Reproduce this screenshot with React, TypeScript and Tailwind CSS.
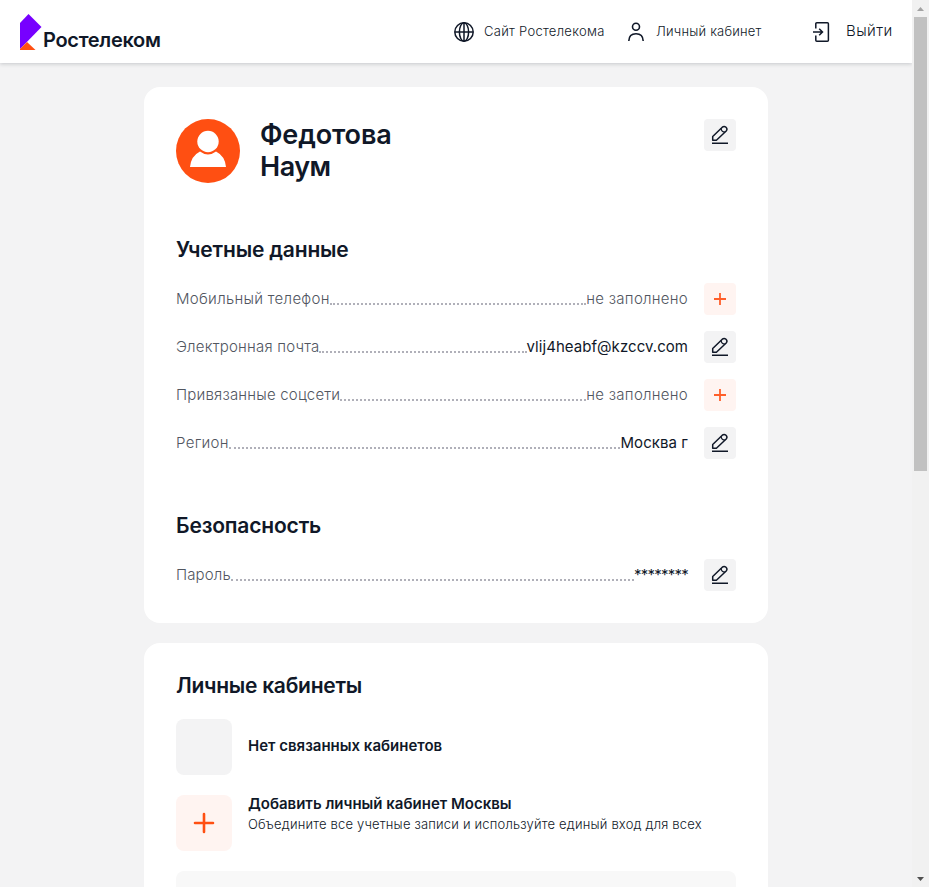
import type { ReactNode } from "react";

function PencilIcon() {
  return (
    <svg width="18" height="20" viewBox="0 0 18 20" fill="none" stroke="#101828" strokeWidth="1.5" strokeLinejoin="round">
      <path d="M1.7 15.2V11.5L11.3 2.2Q13.2 .7 15 2.3Q16.8 4.2 15.2 6L5.4 15.2Z" />
      <path d="M10.2 3.3Q10.2 7.1 14.1 7.1" strokeWidth="1.2" />
      <path d="M1 18.25H17" />
    </svg>
  );
}

function EditButton() {
  return (
    <button className="flex size-8 shrink-0 items-center justify-center rounded bg-[#f3f3f4]">
      <PencilIcon />
    </button>
  );
}

function AddButton() {
  return (
    <button className="flex size-8 shrink-0 items-center justify-center rounded bg-[#fff4f1]">
      <svg width="12" height="12" viewBox="0 0 12 12" stroke="#ff5f2a" strokeWidth="1.8">
        <path d="M6 0V12M0 6H12" />
      </svg>
    </button>
  );
}

interface RowProps {
  label: string;
  labelClass: string;
  children: ReactNode;
  action: "add" | "edit";
}

function Row({ label, labelClass, children, action }: RowProps) {
  return (
    <div className="flex h-8 items-center">
      <span className={`text-[15px] font-light text-[#51565f] ${labelClass}`}>{label}</span>
      <span className="mt-2.5 h-0 flex-1 border-t-2 border-dotted border-[#b0b0b9]" />
      {children}
      <span className="ml-4 flex">{action === "add" ? <AddButton /> : <EditButton />}</span>
    </div>
  );
}

function Empty() {
  return <span className="text-[15px] font-light tracking-[0.27px] text-[#51565f]">не заполнено</span>;
}

function Header() {
  return (
    <header className="flex h-[63px] shrink-0 items-center bg-white pr-5 pl-5 shadow-[0_1px_4px_rgba(16,24,40,0.2)]">
      <div className="flex items-start pt-1">
        <svg className="-mt-px" width="22" height="36" viewBox="0 0 22 36">
          <path d="M0 9L8.5 0L21.5 13L0 35Z" fill="#7700ff" />
          <path d="M7 28L15.5 36H0V35Z" fill="#ff4f12" />
        </svg>
        <span className="mt-[13px] ml-px text-[20px] leading-6 font-semibold tracking-[-0.3px]">Ростелеком</span>
      </div>
      <nav className="ml-auto flex items-center">
        <svg width="20" height="20" viewBox="0 0 20 20" fill="none" stroke="#101828" strokeWidth="1.5">
          <circle cx="10" cy="10" r="9.2" />
          <ellipse cx="10" cy="10" rx="4.6" ry="9.2" />
          <path d="M1 10H19M10 1V19" />
        </svg>
        <span className="ml-2.5 w-[120px] text-[13px] font-light tracking-[0.29px] whitespace-nowrap">Сайт Ростелекома</span>
        <svg className="ml-6" width="16" height="20" viewBox="0 0 16 20" fill="none" stroke="#101828" strokeWidth="1.6">
          <circle cx="8" cy="4.8" r="3.5" />
          <path d="M.8 19Q1 11.8 8 11.8T15.2 19" />
        </svg>
        <span className="ml-3 w-[106px] text-[13px] font-light tracking-[0.2px] whitespace-nowrap">Личный кабинет</span>
        <svg className="ml-[51px]" width="17" height="20" viewBox="0 0 17 20" fill="none" stroke="#101828" strokeWidth="1.5">
          <path d="M2.8 6.4V1.8Q2.8.8 3.8.8H14.4Q15.4.8 15.4 1.8V18.2Q15.4 19.2 14.4 19.2H3.8Q2.8 19.2 2.8 18.2V13.6" />
          <path d="M0 10H9.3M6.2 6.7L9.5 10L6.2 13.3" />
        </svg>
        <span className="ml-4 w-[46px] text-[15px] font-light tracking-[0.4px] whitespace-nowrap">Выйти</span>
      </nav>
    </header>
  );
}

function Scrollbar() {
  return (
    <div className="relative flex w-[17px] shrink-0 flex-col items-center bg-[#f1f1f1]">
      <div className="flex h-[17px] items-center">
        <svg width="7" height="4" viewBox="0 0 7 4" fill="#a3a3a3"><path d="M0 4L3.5 0L7 4Z" /></svg>
      </div>
      <div className="h-[454px] w-[13px] bg-[#c1c1c1]" />
      <div className="mt-auto flex h-[17px] items-center">
        <svg width="7" height="4" viewBox="0 0 7 4" fill="#505050"><path d="M0 0H7L3.5 4Z" /></svg>
      </div>
    </div>
  );
}

export default function App() {
  return (
    <div className="flex h-[887px] w-[929px] overflow-hidden bg-[#f3f3f4] font-['Inter','Liberation_Sans',sans-serif] text-[#101828]">
      <div className="flex w-[912px] flex-col">
        <Header />
        <main className="mx-auto mt-6 flex w-[624px] flex-col gap-5">
          <section className="h-[536px] rounded-2xl bg-white p-8">
            <div className="flex items-start">
              <svg width="64" height="64" viewBox="0 0 64 64">
                <circle cx="32" cy="32" r="32" fill="#ff4f12" />
                <path d="M14 48Q15 37 24 32.5Q32 38.5 40 32.5Q49 37 50 48Z" fill="#fff" />
                <circle cx="32" cy="22.5" r="10.7" fill="#fff" />
              </svg>
              <h1 className="ml-5 text-[27px] leading-8 font-semibold tracking-[-0.15px]">
                Федотова
                <br />
                <span className="tracking-[-0.5px]">Наум</span>
              </h1>
              <span className="ml-auto flex"><EditButton /></span>
            </div>
            <h2 className="mt-[53px] text-[21px] leading-7 font-semibold tracking-[-0.18px]">Учетные данные</h2>
            <div className="mt-[19px] flex flex-col gap-4">
              <Row label="Мобильный телефон" labelClass="tracking-[0.3px]" action="add"><Empty /></Row>
              <Row label="Электронная почта" labelClass="tracking-[0.2px]" action="edit">
                <span className="text-[15px] tracking-[0.05px]">vlij4heabf@kzccv.com</span>
              </Row>
              <Row label="Привязанные соцсети" labelClass="tracking-[0.2px]" action="add"><Empty /></Row>
              <Row label="Регион" labelClass="tracking-[0.3px]" action="edit">
                <span className="text-[15px] tracking-[0.08px]">Москва г</span>
              </Row>
            </div>
            <h2 className="mt-[53px] text-[21px] leading-7 font-semibold tracking-[-0.17px]">Безопасность</h2>
            <div className="mt-[19px]">
              <Row label="Пароль" labelClass="tracking-[0.12px]" action="edit">
                <span className="text-[15px] tracking-[-0.75px]">********</span>
              </Row>
            </div>
          </section>
          <section className="h-[320px] rounded-2xl bg-white px-8 pt-[29px]">
            <h2 className="text-[21px] leading-7 font-semibold tracking-[-0.27px]">Личные кабинеты</h2>
            <div className="mt-[19px] flex items-center gap-4">
              <div className="size-14 rounded-lg bg-[#f3f3f4]" />
              <p className="pb-0.5 text-[15px] font-semibold">Нет связанных кабинетов</p>
            </div>
            <div className="mt-5 flex gap-4">
              <button className="flex size-14 items-center justify-center rounded-lg bg-[#fff4f1]">
                <svg width="22" height="22" viewBox="0 0 22 22" stroke="#ff4f12" strokeWidth="2.6" strokeLinecap="round">
                  <path d="M11 2V20M2 11H20" />
                </svg>
              </button>
              <div>
                <p className="-mt-px text-[15px] leading-5 font-semibold">Добавить личный кабинет Москвы</p>
                <p className="text-[13px] leading-5 font-light tracking-[0.19px]">Объедините все учетные записи и используйте единый вход для всех</p>
              </div>
            </div>
            <div className="mt-5 h-20 rounded-lg bg-[#f8f8f8]" />
          </section>
        </main>
      </div>
      <Scrollbar />
    </div>
  );
}
